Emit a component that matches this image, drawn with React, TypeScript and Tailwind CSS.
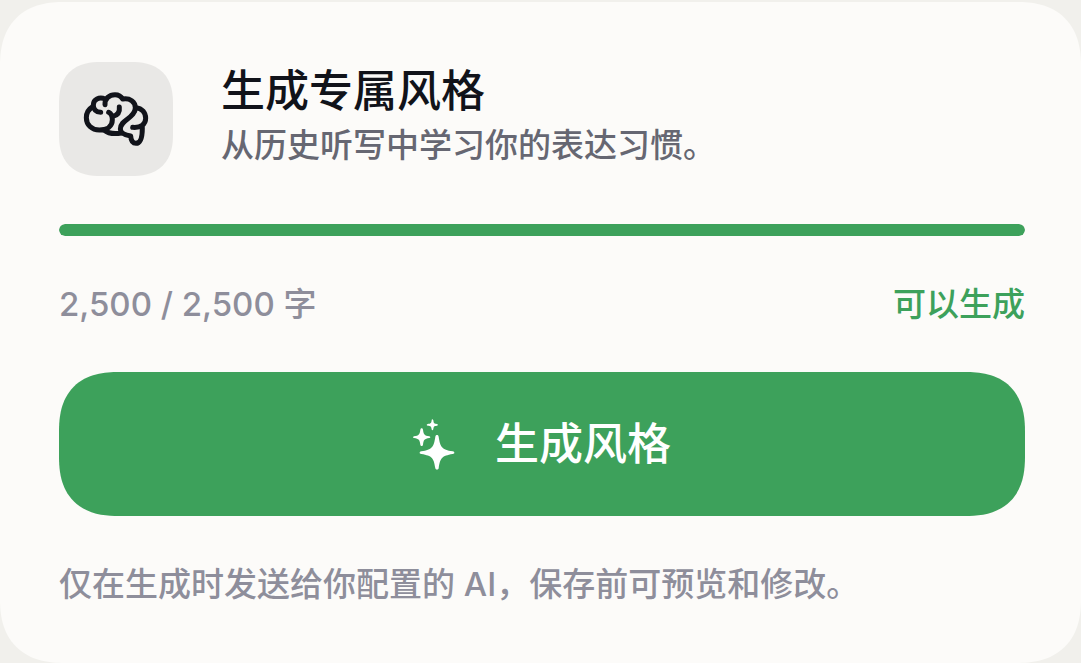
function BrainIcon() {
  return (
    <svg
      viewBox="99 105 198 174"
      className="h-[58px] w-[66px]"
      fill="none"
      stroke="currentColor"
      strokeWidth="15"
      strokeLinecap="round"
      strokeLinejoin="round"
      aria-hidden="true"
    >
      <path d="M127 156C114 164 109 175 109 188C109 209 125 225 148 225C172 225 187 213 187 194C187 184 184 176 176 172" />
      <path d="M152 172C138 172 130 163 130 150C130 133 147 125 166 132" />
      <path d="M165 149C164 131 178 119 195 119C205 119 213 123 218 132C240 128 256 141 256 158C256 190 211 193 211 222C211 233 224 240 242 243C243 257 249 265 258 265C271 265 277 248 277 218" />
      <path d="M187 185C203 181 210 171 208 156" />
      <path d="M257 158C277 160 287 173 287 190C287 208 273 219 248 217" />
      <path d="M162 225C174 235 192 238 214 234" />
    </svg>
  );
}

function SparklesIcon() {
  return (
    <svg viewBox="0 0 126 153" className="h-[51px] w-[42px]" fill="currentColor" aria-hidden="true">
      <path d="M72 48C74 48 76 49 77 53C82 85 86 91 119 97C123 98 124 99 124 101C124 103 123 104 119 105C86 111 82 116 77 148C76 151 74 152 72 152C70 152 68 151 67 148C62 116 58 111 25 105C21 104 20 103 20 101C20 99 21 98 25 97C58 91 62 85 67 53C68 49 70 48 72 48Z" />
      <path d="M26 28C28 28 29 29 30 32C32 47 34 49 49 52C51 53 52 54 52 55C52 56 51 57 49 57C34 60 32 62 30 77C29 80 28 81 26 81C24 81 23 80 22 77C20 62 18 60 3 57C1 57 0 56 0 55C0 54 1 53 3 52C18 49 20 47 22 32C23 29 24 28 26 28Z" />
      <path d="M58 1C59 1 60 2 61 4C62 13 63 14 72 15C74 16 75 17 75 18C75 19 74 19 72 20C63 21 62 22 61 31C60 33 59 34 58 34C57 34 56 33 56 31C55 22 53 21 44 20C42 19 41 19 41 18C41 17 42 16 44 15C53 14 55 13 56 4C56 2 57 1 58 1Z" />
    </svg>
  );
}

export default function App() {
  return (
    <main className="min-h-screen bg-[#f1f0ec] pt-[2px] font-['Inter','Noto_Sans_CJK_SC',sans-serif] font-medium">
      <section
        aria-labelledby="style-title"
        className="rounded-[64px] bg-[#fcfbf9] pt-[60px] pr-[56px] pb-[55px] pl-[59px] [corner-shape:superellipse(1.25)]"
      >
        <header className="flex items-start gap-12">
          <div className="flex size-[114px] shrink-0 items-center justify-center rounded-[42px] bg-[#e9e8e6] text-[#11131a] [corner-shape:superellipse(1.3)]">
            <BrainIcon />
          </div>
          <div>
            <h1 id="style-title" className="text-[44px] leading-[58px] text-[#11131a]">
              生成专属风格
            </h1>
            <p className="text-[33px] leading-[50px] text-[#666772]">从历史听写中学习你的表达习惯。</p>
          </div>
        </header>

        <div
          role="progressbar"
          aria-label="字数"
          aria-valuemin={0}
          aria-valuemax={2500}
          aria-valuenow={2500}
          className="mt-12 h-3 overflow-hidden rounded-full bg-[#e9e8e6]"
        >
          <div className="h-full w-full rounded-full bg-[#3da15b]" />
        </div>

        <div className="mt-11 flex items-center justify-between text-[33px] leading-[48px]">
          <span className="text-[#8e8e9b]">2,500 / 2,500 字</span>
          <span className="text-[#3da15b]">可以生成</span>
        </div>

        <button
          type="button"
          className="mt-11 flex h-36 w-full cursor-pointer items-center justify-center gap-10 rounded-[60px] bg-[#3da15b] text-[44px] leading-[60px] text-white [corner-shape:superellipse(1.3)]"
        >
          <SparklesIcon />
          <span>生成风格</span>
        </button>

        <p className="mt-11 text-[33px] leading-[48px] text-[#8e8e9b]">
          仅在生成时发送给你配置的 AI，保存前可预览和修改。
        </p>
      </section>
    </main>
  );
}
